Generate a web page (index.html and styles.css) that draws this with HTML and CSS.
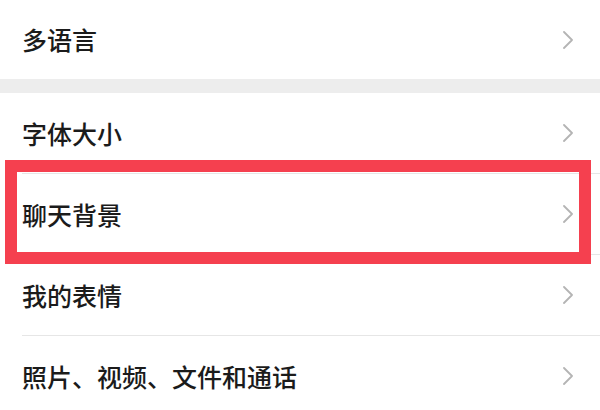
FILE: index.html
```html
<!DOCTYPE html>
<html lang="zh-CN">
<head>
<meta charset="utf-8">
<link rel="stylesheet" href="styles.css">
</head>
<body>
<div class="group">
  <div class="row">
    <span class="label">多语言</span>
    <svg class="chev" viewBox="0 0 10 18" width="10" height="18"><path d="M1 1 L9 9 L1 17" /></svg>
  </div>
</div>
<div class="gap"></div>
<div class="group">
  <div class="row">
    <span class="label">字体大小</span>
    <svg class="chev" viewBox="0 0 10 18" width="10" height="18"><path d="M1 1 L9 9 L1 17" /></svg>
  </div>
  <div class="sep"></div>
  <div class="row highlighted">
    <span class="label">聊天背景</span>
    <svg class="chev" viewBox="0 0 10 18" width="10" height="18"><path d="M1 1 L9 9 L1 17" /></svg>
    <div class="mark"></div>
  </div>
  <div class="sep"></div>
  <div class="row">
    <span class="label">我的表情</span>
    <svg class="chev" viewBox="0 0 10 18" width="10" height="18"><path d="M1 1 L9 9 L1 17" /></svg>
  </div>
  <div class="sep"></div>
  <div class="row">
    <span class="label">照片、视频、文件和通话</span>
    <svg class="chev" viewBox="0 0 10 18" width="10" height="18"><path d="M1 1 L9 9 L1 17" /></svg>
  </div>
</div>
</body>
</html>
```
FILE: styles.css
```css
html, body {
  margin: 0;
  padding: 0;
  background: #ffffff;
  overflow: hidden;
}
body {
  width: 600px;
  height: 410px;
  font-family: "Noto Sans CJK SC", "Noto Sans", sans-serif;
  color: #1b1b1b;
}
.group {
  display: flex;
  flex-direction: column;
}
.group:first-child .row {
  height: 79px;
}
.row {
  position: relative;
  height: 80px;
  display: flex;
  align-items: center;
  justify-content: space-between;
  padding: 0 27px 0 22px;
}
.label {
  font-size: 25px;
  font-weight: 500;
  line-height: 1;
}
.chev {
  display: block;
  fill: none;
  stroke: #b4b4b4;
  stroke-width: 1.8;
  stroke-linecap: round;
  stroke-linejoin: round;
}
.gap {
  height: 14px;
  background: #ededed;
}
.sep {
  height: 1px;
  margin-left: 22px;
  background: #e6e6e6;
}
.mark {
  position: absolute;
  left: 5px;
  right: 9px;
  top: -14px;
  bottom: -10px;
  border: 12px solid #f5404f;
  pointer-events: none;
}
```
